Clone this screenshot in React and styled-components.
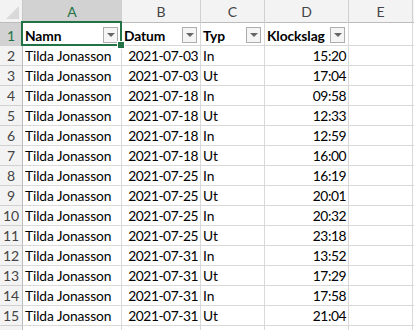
import React from 'react'
import styled, { createGlobalStyle, css } from 'styled-components'

const GlobalStyle = createGlobalStyle`
  html, body {
    margin: 0;
    padding: 0;
    background: #ffffff;
    overflow: hidden;
  }
`

const columns = ['A', 'B', 'C', 'D', 'E', '']

const headers = ['Namn', 'Datum', 'Typ', 'Klockslag']

const rows = [
  ['2021-07-03', 'In', '15:20'],
  ['2021-07-03', 'Ut', '17:04'],
  ['2021-07-18', 'In', '09:58'],
  ['2021-07-18', 'Ut', '12:33'],
  ['2021-07-18', 'In', '12:59'],
  ['2021-07-18', 'Ut', '16:00'],
  ['2021-07-25', 'In', '16:19'],
  ['2021-07-25', 'Ut', '20:01'],
  ['2021-07-25', 'In', '20:32'],
  ['2021-07-25', 'Ut', '23:18'],
  ['2021-07-31', 'In', '13:52'],
  ['2021-07-31', 'Ut', '17:29'],
  ['2021-07-31', 'In', '17:58'],
  ['2021-07-31', 'Ut', '21:04'],
]

const Sheet = styled.div`
  display: grid;
  grid-template-columns: 23px 99px 79px 64px 84px 64px 1fr;
  grid-template-rows: 23px 23px repeat(15, 20px);
  width: 414px;
  height: 330px;
  overflow: hidden;
  font-family: Lato, 'Liberation Sans', sans-serif;
  font-size: 13.8px;
  color: #000;
  position: relative;
`

const Corner = styled.div`
  position: relative;
  background: #f3f3f3;
  border-right: 1px solid #c8c8c8;
  border-bottom: 1px solid #bcbcbc;

  &::after {
    content: '';
    position: absolute;
    right: 3px;
    bottom: 3px;
    width: 0;
    height: 0;
    border-left: 13px solid transparent;
    border-bottom: 13px solid #d9d9d9;
  }
`

const ColHead = styled.div`
  display: flex;
  align-items: center;
  justify-content: center;
  background: ${p => (p.$active ? '#d2d2d2' : '#f3f3f3')};
  color: ${p => (p.$active ? '#217346' : '#444')};
  border-right: 1px solid #d0d0d0;
  border-bottom: 1px solid #bcbcbc;
  font-size: 14px;
  padding-top: 1px;
  box-sizing: border-box;
`

const RowHead = styled.div`
  display: flex;
  align-items: flex-end;
  justify-content: center;
  padding-bottom: 1px;
  background: ${p => (p.$active ? '#d2d2d2' : '#f3f3f3')};
  color: ${p => (p.$active ? '#217346' : '#444')};
  border-right: 1px solid #bcbcbc;
  border-bottom: 1px solid #d0d0d0;
  font-size: 14px;
  box-sizing: border-box;
`

const Cell = styled.div`
  display: flex;
  align-items: flex-end;
  justify-content: ${p => (p.$right ? 'flex-end' : 'flex-start')};
  gap: 4px;
  padding: 0 2px 1px 2px;
  border-right: 1px solid #d9d9d9;
  border-bottom: 1px solid #d9d9d9;
  box-sizing: border-box;
  white-space: nowrap;
  overflow: hidden;
  line-height: 17px;
  letter-spacing: ${p => (p.$right ? '-0.45px' : '-0.1px')};
  ${p =>
    p.$head &&
    css`
      justify-content: space-between;
      font-weight: 700;
      padding-bottom: 1px;
    `}
`

const FilterButton = styled.span`
  flex: none;
  display: flex;
  align-items: center;
  justify-content: center;
  width: 15px;
  height: 16px;
  margin-bottom: 1px;
  margin-right: 1px;
  background: #f5f5f5;
  border: 1px solid #adadad;
  box-sizing: border-box;

  &::before {
    content: '';
    width: 0;
    height: 0;
    border-left: 4px solid transparent;
    border-right: 4px solid transparent;
    border-top: 4px solid #666;
  }
`

const Selection = styled.div`
  position: absolute;
  left: 21px;
  top: 21px;
  width: 101px;
  height: 25px;
  border: 2px solid #217346;
  box-sizing: border-box;
  pointer-events: none;

  &::after {
    content: '';
    position: absolute;
    right: -5px;
    bottom: -5px;
    width: 6px;
    height: 6px;
    background: #217346;
    border: 1px solid #fff;
  }
`

export default function App() {
  return (
    <>
      <GlobalStyle />
      <Sheet>
        <Corner />
        {columns.map((c, i) => (
          <ColHead key={i} $active={c === 'A'}>
            {c}
          </ColHead>
        ))}

        <RowHead $active>1</RowHead>
        {headers.map(h => (
          <Cell key={h} $head>
            <span>{h}</span>
            <FilterButton />
          </Cell>
        ))}
        <Cell />
        <Cell />

        {rows.map((r, i) => (
          <React.Fragment key={i}>
            <RowHead>{i + 2}</RowHead>
            <Cell>Tilda Jonasson</Cell>
            <Cell $right>{r[0]}</Cell>
            <Cell>{r[1]}</Cell>
            <Cell $right>{r[2]}</Cell>
            <Cell />
            <Cell />
          </React.Fragment>
        ))}

        <RowHead />
        {columns.map((c, i) => (
          <Cell key={i} />
        ))}
        <Selection />
      </Sheet>
    </>
  )
}
